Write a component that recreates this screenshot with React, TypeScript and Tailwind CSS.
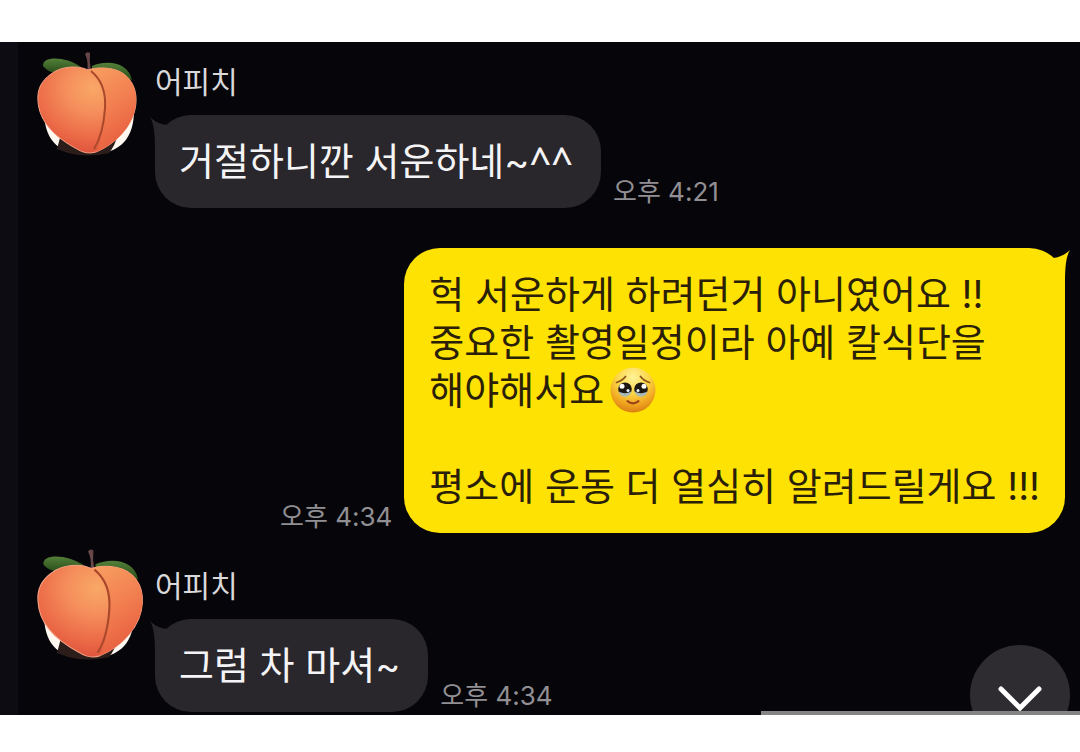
import type { ReactNode } from 'react';

type Message = {
  id: number;
  mine: boolean;
  time: string;
  body: ReactNode;
  peachTransform?: string;
};

const TearyFace = () => (
  <svg viewBox="0 0 46 46" className="ml-1.5 inline-block size-[46px] align-middle" role="img" aria-label="🥹">
    <defs>
      <radialGradient id="face" cx="0.5" cy="0.22" r="0.8">
        <stop offset="0" stopColor="#fff39a" />
        <stop offset="0.45" stopColor="#fcd545" />
        <stop offset="0.75" stopColor="#f0a51f" />
        <stop offset="1" stopColor="#d87a14" />
      </radialGradient>
    </defs>
    <circle cx="23" cy="23" r="22.5" fill="url(#face)" />
    <path d="M6.5 15.5Q12 14 15.5 9.5M30.5 9.5Q34 14 39.5 15.5" fill="none" stroke="#8a5314" strokeWidth="1.8" strokeLinecap="round" />
    <ellipse cx="15" cy="22" rx="6.8" ry="6.6" fill="#1e1812" />
    <ellipse cx="31" cy="22" rx="6.8" ry="6.6" fill="#1e1812" />
    <path d="M8.8 24.5Q15 28 21.2 24.5Q20 29.5 15 29.8Q10 29.5 8.8 24.5Z" fill="#a9b9b8" />
    <path d="M24.8 24.5Q31 28 37.2 24.5Q36 29.5 31 29.8Q26 29.5 24.8 24.5Z" fill="#a9b9b8" />
    <circle cx="12" cy="19.2" r="2.5" fill="#fff" />
    <circle cx="34" cy="19.2" r="2.5" fill="#fff" />
    <circle cx="18" cy="23.4" r="1.5" fill="#e9f6ff" />
    <circle cx="28" cy="23.4" r="1.5" fill="#e9f6ff" />
    <path d="M17.5 34.2Q23 38.6 28.5 34.2" fill="none" stroke="#9c431c" strokeWidth="2.2" strokeLinecap="round" />
  </svg>
);

const messages: Message[] = [
  {
    id: 1,
    mine: false,
    time: '오후 4:21',
    body: (
      <>
        거절하니깐 서운하네~<span className="font-['Noto_Sans',sans-serif] leading-none font-medium">^^</span>
      </>
    )
  },
  {
    id: 2,
    mine: true,
    time: '오후 4:34',
    body: (
      <>
        <p>헉 서운하게 하려던거 아니였어요 !!</p>
        <p>중요한 촬영일정이라 아예 칼식단을</p>
        <p className="flex h-12 items-center">
          해야해서요
          <TearyFace />
        </p>
        <p className="mt-12">평소에 운동 더 열심히 알려드릴게요 !!!</p>
      </>
    )
  },
  {
    id: 3,
    mine: false,
    time: '오후 4:34',
    body: '그럼 차 마셔~',
    peachTransform: 'translate(8 112) scale(1.065) translate(-8 -112)'
  }
];

const Avatar = ({ peachTransform }: { peachTransform?: string }) => (
  <svg viewBox="0 0 120 120" className="size-[120px] shrink-0" role="img" aria-label="어피치">
    <defs>
      <radialGradient id="peach" cx="0.56" cy="0.25" r="0.8">
        <stop offset="0" stopColor="#f9a866" />
        <stop offset="0.35" stopColor="#f58e5c" />
        <stop offset="0.7" stopColor="#ec6c48" />
        <stop offset="1" stopColor="#dd4f3a" />
      </radialGradient>
      <linearGradient id="lobe" x1="0.2" y1="0" x2="0.6" y2="1">
        <stop offset="0" stopColor="#f79c60" />
        <stop offset="0.5" stopColor="#f27e50" />
        <stop offset="1" stopColor="#e65a3d" />
      </linearGradient>
      <linearGradient id="leaf" x1="0" y1="0" x2="0" y2="1">
        <stop offset="0" stopColor="#54803a" />
        <stop offset="1" stopColor="#284d18" />
      </linearGradient>
    </defs>
    <path d="M14 68H104C104 95 92 112 59 112.5S14 96 14 68Z" fill="#fff8f0" />
    <path d="M31 92L88 92Q85 104 79 111Q58 116 38 111L27 107Z" fill="#2a1d1a" />
    <g transform={peachTransform}>
      <path d="M13 24C12 14 35 14 51 25C42 30 22 36 13 24Z" fill="url(#leaf)" />
      <path d="M62 24C78 17 99 21 102 38C90 34 74 33 62 28Z" fill="url(#leaf)" />
      <path d="M57 29Q59 20 55 12Q57 9 60 11Q59 20 61 29Z" fill="#67474a" />
      <path
        d="M58 28C48 23 31 24 21 32C11 39 7 48 8 59C9 80 26 96 47 107Q56 113 66 110C88 101 105 81 106 60C107 44 98 30 82 27C72 25 64 26 58 28Z"
        fill="url(#peach)"
        stroke="#f4a083"
        strokeWidth="1"
      />
      <path d="M58 28C66 25 74 26 82 27C98 30 107 44 106 60C105 81 88 101 66 110C72 100 75 82 75 64C75 46 68 34 58 28Z" fill="url(#lobe)" />
      <path d="M61 29C72 38 76 50 75 66C74 82 71 96 64 107" fill="none" stroke="#a9482a" strokeWidth="2" />
    </g>
  </svg>
);

const Tail = ({ mine }: { mine: boolean }) => (
  <svg
    viewBox="0 0 28 36"
    aria-hidden="true"
    className={`absolute top-0 h-9 w-7 ${
      mine ? '-right-[5px] -scale-x-100 text-[#fde203]' : '-left-[5px] text-[#29272b]'
    }`}
  >
    <path d="M0 2C4 9 5 18 5 36H28V4Q22 5 17 10C9 9 4 6 0 2Z" fill="currentColor" />
  </svg>
);

const Bubble = ({ message }: { message: Message }) => (
  <div className={`flex items-end gap-3 ${message.mine ? 'flex-row-reverse' : ''}`}>
    <div
      className={`relative rounded-[36px] pt-[22px] pb-[23px] text-[38px] leading-12 whitespace-nowrap ${
        message.mine ? 'bg-[#fde203] px-[25px] text-[#2a2008]' : 'bg-[#29272b] pr-7 pl-6 text-[#f4f3f5]'
      }`}
    >
      <Tail mine={message.mine} />
      <div className="relative">{message.body}</div>
    </div>
    <time className="text-[26px] leading-8 whitespace-nowrap text-[#918f93]">{message.time}</time>
  </div>
);

export default function App() {
  return (
    <div className="bg-white pt-[42px] pb-[37px] font-['Inter','Noto_Sans_CJK_KR',sans-serif]">
      <main className="relative overflow-hidden border-l-[18px] border-[#0d0c12] bg-[#060509] pb-[3px]">
        {messages.map((message) =>
          message.mine ? (
            <article key={message.id} className="mt-10 mb-[13px] pr-[15px]">
              <Bubble message={message} />
            </article>
          ) : (
            <article key={message.id} className="flex gap-[5px] pl-3">
              <Avatar peachTransform={message.peachTransform} />
              <div className="pt-6">
                <h2 className="mb-[17px] text-[30px] leading-8 text-[#d9d8da]">어피치</h2>
                <Bubble message={message} />
              </div>
            </article>
          )
        )}
        <button
          type="button"
          aria-label="맨 아래로"
          className="absolute right-[10px] -bottom-[30px] flex size-[100px] items-center justify-center rounded-full bg-[#2e2c30]"
        >
          <svg viewBox="0 0 44 26" className="mt-2 h-[26px] w-11" fill="none" stroke="#fff" strokeWidth="5" strokeLinecap="round">
            <path d="M3 3L22 22L41 3" />
          </svg>
        </button>
        <div className="absolute right-0 bottom-0 h-1 w-[30%] bg-[#858485]" />
      </main>
    </div>
  );
}
